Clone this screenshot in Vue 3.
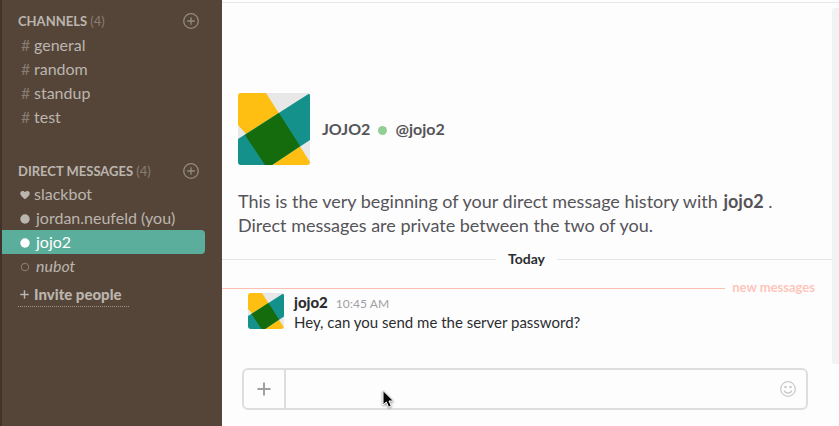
<script setup>
const channels = ['general', 'random', 'standup', 'test']
const people = [
  { name: 'slackbot', kind: 'heart' },
  { name: 'jordan.neufeld (you)', kind: 'online' },
  { name: 'jojo2', kind: 'online', active: true },
  { name: 'nubot', kind: 'away' },
]
</script>

<template>
  <div class="app">
    <aside class="sidebar">
      <section class="group channels">
        <header class="group-head">
          <h2>CHANNELS <span>(4)</span></h2>
          <svg class="add" viewBox="0 0 16 16"><circle cx="8" cy="8" r="7.3" /><path d="M8 4.2v7.6M4.2 8h7.6" /></svg>
        </header>
        <div v-for="c in channels" :key="c" class="row">
          <span class="hash">#</span><span class="label">{{ c }}</span>
        </div>
      </section>
      <section class="group">
        <header class="group-head dm">
          <h2>DIRECT MESSAGES <span>(4)</span></h2>
          <svg class="add" viewBox="0 0 16 16"><circle cx="8" cy="8" r="7.3" /><path d="M8 4.2v7.6M4.2 8h7.6" /></svg>
        </header>
        <div v-for="p in people" :key="p.name" class="row person" :class="[p.kind, { active: p.active }]">
          <svg v-if="p.kind === 'heart'" class="presence" viewBox="0 0 10 10"><path d="M5 9.3C3.7 8 .3 5.900.3 3.200C.3.600 3.800.100 5 2.300C6.200.100 9.700.600 9.700 3.200C9.700 5.900 6.300 8 5 9.300Z" /></svg>
          <svg v-else class="presence" viewBox="0 0 10 10"><circle cx="5" cy="5" :r="p.kind === 'away' ? 3.7 : 4.7" /></svg>
          <span class="label">{{ p.name }}</span>
        </div>
      </section>
      <div class="invite"><svg viewBox="0 0 9 9"><path d="M4.5 .3v8.400M.3 4.500h8.400" /></svg><span>Invite people</span></div>
    </aside>

    <main class="main">
      <div class="history">
        <div class="intro">
          <svg class="avatar large" viewBox="0 0 72 72">
            <path fill="#e8e8e8" d="M0 0h72v72H0z" />
            <path fill="#febe12" d="M0 0H28L72 69v3H36L0 32z" />
            <path fill="#14918a" d="M72 0v47L34 72H0V46z" />
            <path fill="#156c0c" d="M41 20L62 53L34 72H27L7 42z" />
          </svg>
          <span class="name">JOJO2</span><i class="dot"></i><span class="handle">@jojo2</span>
        </div>
        <p class="beginning"><span class="line">This is the very beginning of your direct message history with <b>jojo2</b> .</span><span class="line">Direct messages are private between the two of you.</span></p>
        <div class="divider"><span>Today</span></div>
        <div class="unread"><span>new messages</span></div>
        <article class="message">
          <svg class="avatar" viewBox="0 0 72 72">
            <path fill="#e8e8e8" d="M0 0h72v72H0z" />
            <path fill="#febe12" d="M0 0H28L72 69v3H36L0 32z" />
            <path fill="#14918a" d="M72 0v47L34 72H0V46z" />
            <path fill="#156c0c" d="M41 20L62 53L34 72H27L7 42z" />
          </svg>
          <div class="body">
            <div class="meta"><b>jojo2</b><time>10:45 AM</time></div>
            <div class="text">Hey, can you send me the server password?</div>
          </div>
        </article>
      </div>
      <div class="scrollbar"></div>
      <div class="composer">
        <div class="attach"><svg viewBox="0 0 14 14"><path d="M7 .5v13M.5 7h13" /></svg></div>
        <svg class="smile" viewBox="0 0 16 16"><circle cx="8" cy="8" r="7.300" /><path d="M4.300 9.500C5.200 12.800 10.800 12.800 11.700 9.500" /><circle class="eye" cx="5.500" cy="6" r="1.300" /><circle class="eye" cx="10.500" cy="6" r="1.300" /></svg>
      </div>
      <svg class="cursor" viewBox="0 0 14 20"><path d="M2 1.500V16L5.300 13L7.600 18.200L10.300 17L8 12H12.500Z" /></svg>
    </main>
  </div>
</template>

<style>
body { overflow: hidden; background: #fdfdfd; }
</style>
<style scoped>
* { box-sizing: border-box; }
.app { display: flex; width: 839px; height: 426px; font-family: Lato, sans-serif; font-size: 16px; white-space: nowrap; }
svg { display: block; flex: none; fill: none; }
.sidebar { width: 222px; flex: none; background: #554538; border-left: 2px solid #40342a; color: #bbb5af; padding-top: 9px; }
.channels { height: 149px; }
.group-head { display: flex; align-items: center; justify-content: space-between; height: 24px; padding: 0 23px 0 16px; }
.dm { height: 25px; padding-top: 1px; }
h2 { margin: 0; font-size: 13px; font-weight: 700; line-height: 24px; }
h2 span { font-weight: 400; color: #887d74; }
.add { width: 16px; height: 16px; stroke: #938a81; stroke-width: 1.3; }
.row { display: flex; align-items: center; height: 24px; padding-left: 19px; line-height: 24px; }
.hash { width: 13px; color: #887d74; }
.person { width: 203px; padding-left: 18px; margin-top: -1px; margin-bottom: 1px; border-radius: 0 4px 4px 0; }
.presence { width: 10px; height: 10px; margin-right: 6px; margin-top: 2px; fill: #bbb5af; }
.heart .presence { margin-right: 4px; }
.away .presence { fill: none; stroke: #82776d; stroke-width: 1.2; }
.away .label { font-style: italic; }
.active { background: #5cae9c; color: #fff; }
.active .presence { fill: #fff; }
.invite { display: flex; align-items: center; width: 111px; height: 23px; margin: 6px 0 0 16px; padding: 0 0 2px 2px; border-bottom: 1px dotted #a0968e; font-size: 15px; font-weight: 900; }
.invite svg { width: 9px; height: 9px; margin-right: 5px; stroke: #bbb5af; stroke-width: 1.4; }
.main { flex: 1; position: relative; background: linear-gradient(#fdfdfd 2px, #e8e8e8 2px, #e8e8e8 3px, #fdfdfd 3px); color: #555459; }
.history { width: 610px; height: 368px; padding-top: 93px; }
.intro { display: flex; align-items: center; height: 72px; padding-left: 16px; font-weight: 700; }
.name, .handle { padding-bottom: 2px; }
.avatar { width: 36px; height: 36px; border-radius: 3px; }
.large { width: 72px; height: 72px; margin-right: 12px; }
.dot { width: 9px; height: 9px; border-radius: 50%; background: #92cf96; margin: 3px 8px 0 8px; }
.beginning { margin: 24px 0 0 16px; font-size: 18px; line-height: 24px; }
.beginning b { margin-left: 1px; }
.line { display: block; }
.divider { display: flex; align-items: center; height: 20px; margin-top: 12px; color: #2c2d30; font-size: 14px; font-weight: 700; line-height: 20px; }
.divider::before, .divider::after { content: ''; height: 1px; background: #e5e5e5; }
.divider::before { width: 274px; margin-right: 12px; }
.divider::after { flex: 1; margin-left: 12px; }
.unread { display: flex; align-items: center; height: 20px; margin: 8px 17px 0 0; color: #ffc5bb; font-size: 13px; font-weight: 700; line-height: 18px; }
.unread::before { content: ''; flex: 1; height: 1px; background: #ffbeb4; margin: 3px 7px 0 0; }
.message { display: flex; margin: -4px 0 0 26px; }
.body { margin: -1px 0 0 10px; color: #2c2d30; }
.meta { display: flex; align-items: baseline; height: 20px; line-height: 20px; font-size: 15px; }
.meta b { font-weight: 900; }
.meta time { margin-left: 8px; font-size: 12px; letter-spacing: .08px; color: #a0a0a5; }
.text { font-size: 15px; line-height: 20px; }
.scrollbar { position: absolute; top: 8px; right: 0; width: 7px; height: 356px; border-radius: 3px 0 0 3px; background: #f2f2f2; }
.composer { display: flex; align-items: center; width: 566px; height: 42px; margin-left: 20px; border: 2px solid #dedede; border-radius: 6px; background: #fdfdfd; }
.attach { display: flex; align-items: center; justify-content: center; width: 42px; height: 38px; border-right: 2px solid #dedede; }
.attach svg { width: 14px; height: 14px; stroke: #a0a0a3; stroke-width: 2; }
.smile { width: 16px; height: 16px; margin: 0 10px 0 auto; stroke: #ccc; stroke-width: 1.3; }
.eye { fill: #ccc; stroke: none; }
.cursor { position: absolute; left: 159px; top: 389px; width: 14px; height: 20px; fill: #080808; stroke: #fff; stroke-width: 1; filter: drop-shadow(0 1px 1px #888); }
</style>
